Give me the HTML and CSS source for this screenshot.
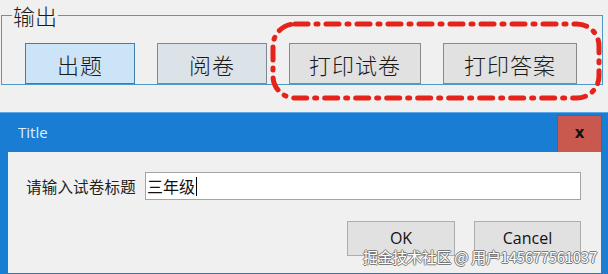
FILE: index.html
```html
<!DOCTYPE html>
<html>
<head>
<meta charset="utf-8">
<link rel="stylesheet" href="styles.css">
</head>
<body>
<div class="top">
  <fieldset class="group">
    <legend class="group-title">输出</legend>
    <div class="btn-row">
      <div class="wbtn wbtn-active w110">出题</div>
      <div class="wbtn wbtn-hover w110">阅卷</div>
      <div class="wbtn w132">打印试卷</div>
      <div class="wbtn w134">打印答案</div>
    </div>
  </fieldset>
  <svg class="mark" width="336" height="84" viewBox="0 0 336 84">
    <rect x="3" y="3" width="326" height="74" rx="22" ry="22" fill="none" stroke="#e5231b" stroke-width="5" stroke-linecap="round" stroke-dasharray="13 8 2 8"/>
  </svg>
</div>
<div class="dialog">
  <div class="titlebar">
    <span class="title">Title</span>
    <div class="close">x</div>
  </div>
  <div class="dbody">
    <div class="field-row">
      <span class="label">请输入试卷标题</span>
      <div class="input"><span class="value">三年级</span><span class="caret"></span></div>
    </div>
    <div class="actions">
      <div class="dbtn ok">OK</div>
      <div class="dbtn cancel">Cancel</div>
    </div>
  </div>
  <div class="watermark">掘金技术社区 @ 用户145677561037</div>
</div>
</body>
</html>
```
FILE: styles.css
```css
html, body {
  margin: 0;
  padding: 0;
}
body {
  width: 608px;
  height: 274px;
  overflow: hidden;
  background: #f0f0f0;
  font-family: "Noto Sans", "Noto Sans CJK SC", sans-serif;
}
.top {
  position: relative;
  height: 110px;
  background: #f0f0f0;
}
.group {
  margin: 2px 5px 0 1px;
  padding: 15px 0 0 23px;
  height: 66px;
  border: 1px solid #4b9bc6;
  border-radius: 0;
}
.group-title {
  margin-left: -13px;
  padding: 0 1px;
  font-family: "Noto Sans CJK SC", sans-serif;
  font-weight: 300;
  font-size: 22px;
  line-height: 26px;
  letter-spacing: 0;
  color: #1a1a1a;
}
.btn-row {
  display: flex;
  gap: 22px;
}
.wbtn {
  box-sizing: border-box;
  height: 41px;
  border: 1px solid #8a8a8a;
  background: #e1e1e1;
  display: flex;
  align-items: center;
  justify-content: center;
  font-family: "Noto Sans CJK SC", sans-serif;
  font-weight: 300;
  font-size: 22px;
  color: #1a1a1a;
  letter-spacing: 1px;
}
.wbtn-active {
  background: #cce4f7;
  border-color: #3f7fae;
}
.wbtn-hover {
  background: #dce3e8;
  border-color: #7d8a93;
}
.w110 { width: 110px; }
.w132 { width: 132px; }
.w134 { width: 134px; }
.mark {
  position: absolute;
  left: 270px;
  top: 19px;
}
.dialog {
  position: relative;
  height: 164px;
  background: #1a7dd4;
  border-top: 1px solid #5aa6e6;
  box-sizing: border-box;
  padding: 0 7px 3px 8px;
  display: flex;
  flex-direction: column;
}
.titlebar {
  height: 39px;
  display: flex;
  align-items: flex-start;
  justify-content: space-between;
}
.title {
  margin: 9px 0 0 10px;
  font-family: "Open Sans", sans-serif;
  font-size: 15px;
  color: #dcefff;
}
.close {
  margin: 2px -1px 0 0;
  width: 45px;
  height: 37px;
  box-sizing: border-box;
  background: #c9584e;
  border: 1px solid #a5443c;
  border-bottom: none;
  display: flex;
  align-items: center;
  justify-content: center;
  font-family: "DejaVu Sans", sans-serif;
  font-weight: bold;
  font-size: 15px;
  color: #111;
  padding-bottom: 3px;
}
.dbody {
  flex: 1;
  background: #f0f0f0;
  border-left: 1px solid #e8f2fb;
  padding: 20px 20px 0 17px;
}
.field-row {
  display: flex;
  align-items: center;
  height: 28px;
}
.label {
  width: 119px;
  font-family: "Noto Sans CJK SC", sans-serif;
  font-size: 15.5px;
  color: #222;
  letter-spacing: 0.2px;
}
.input {
  flex: 1;
  box-sizing: border-box;
  height: 28px;
  background: #fff;
  border: 1px solid #a4a4a4;
  display: flex;
  align-items: center;
  padding-left: 1px;
}
.value {
  font-family: "Noto Sans CJK SC", sans-serif;
  font-size: 16px;
  color: #111;
}
.caret {
  width: 1px;
  height: 19px;
  background: #000;
  margin-left: 1px;
}
.actions {
  margin-top: 21px;
  display: flex;
  justify-content: flex-end;
  gap: 19px;
}
.dbtn {
  box-sizing: border-box;
  height: 35px;
  background: #e1e1e1;
  border: 1px solid #adadad;
  display: flex;
  align-items: center;
  justify-content: center;
  font-family: "Open Sans", sans-serif;
  font-size: 16px;
  color: #111;
  padding-bottom: 2px;
}
.ok { width: 108px; }
.cancel { width: 107px; }
.watermark {
  position: absolute;
  left: 363px;
  top: 135px;
  font-family: "Noto Sans CJK SC", sans-serif;
  font-size: 15px;
  line-height: 18px;
  color: #fff;
  letter-spacing: -0.3px;
  text-shadow: 1px 0 0 #7a7a7a, -1px 0 0 #7a7a7a, 0 1px 0 #7a7a7a, 0 -1px 0 #7a7a7a;
  white-space: nowrap;
}
```
